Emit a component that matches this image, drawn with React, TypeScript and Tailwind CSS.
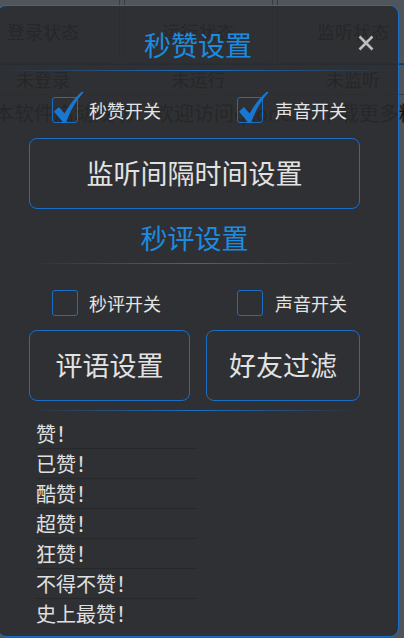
import React from "react";

const CheckBox: React.FC<{ checked?: boolean }> = ({ checked }) => (
  <span className="relative block h-[26px] w-[26px] shrink-0 rounded-[3px] border border-[#1a6fc4]">
    {checked && (
      <svg
        className="absolute left-[-1px] top-[-7px] h-[34px] w-[33px] overflow-visible"
        viewBox="0 -6 32 34"
      >
        <path
          d="M1.5 14.5 L6.5 10 L12 16.5 C17 8 22 1 29.5 -5.5 L31 -4.5 C24 3 17.5 14 13.5 26 L11 26 Z"
          fill="#1877d2"
        />
      </svg>
    )}
  </span>
);

const CheckRow: React.FC<{ first: string; checked?: boolean }> = ({ first, checked }) => (
  <div className="flex h-[26px] items-center pl-[23px] text-[18px] text-[#e4e4e4]">
    <CheckBox checked={checked} />
    <span className="ml-[11px] w-[72px] leading-none">{first}</span>
    <span className="ml-[76px]">
      <CheckBox checked={checked} />
    </span>
    <span className="ml-[12px] leading-none">声音开关</span>
  </div>
);

const Divider: React.FC = () => (
  <div className="h-px w-full bg-gradient-to-r from-transparent via-[#1a6fc4] to-transparent" />
);

const comments = ["赞！", "已赞！", "酷赞！", "超赞！", "狂赞！", "不得不赞！", "史上最赞！"];

export default function App() {
  return (
    <div className="relative h-[638px] w-[404px] overflow-hidden bg-[#c8d4e6] font-['Noto_Sans_CJK_SC','Noto_Sans',sans-serif]">
      {/* page behind the dialog */}
      <div className="flex flex-col">
        <div className="-ml-[34px] -mt-[6px] flex h-[71px] gap-[4px] border-b border-[#3d8fe0]">
          {["登录状态", "运行状态", "监听状态"].map((t, i) => (
            <div
              key={t}
              className={`flex shrink-0 items-center justify-center rounded-[5px] border border-[#8e98a4] pt-[4px] text-[18px] text-[#333] ${
                i === 0 ? "w-[154px]" : i === 1 ? "w-[149px]" : "w-[152px]"
              }`}
            >
              {t}
            </div>
          ))}
        </div>
        <div className="-ml-[34px] flex h-[30px] gap-[4px] border-b border-[#8e98a4]">
          {["未登录", "未运行", "未监听"].map((t, i) => (
            <div
              key={t}
              className={`flex shrink-0 items-center justify-center text-[18px] text-[#333] ${
                i === 0 ? "w-[154px]" : i === 1 ? "w-[149px]" : "w-[152px]"
              }`}
            >
              {t}
            </div>
          ))}
        </div>
        <p className="-ml-[6px] mt-[3px] whitespace-nowrap text-[20px] leading-[30px] text-[#333]">
          本软件启动成功！欢迎访问qzone.cn下载更多精彩内容
        </p>
      </div>

      {/* mask */}
      <div className="absolute inset-0 bg-black/60" />

      {/* dialog */}
      <div className="absolute left-[-3px] top-[5px] h-[632px] w-[402px] rounded-[9px] border border-[#1a6fc4] bg-[rgba(41,42,44,0.85)]">
        <div className="relative flex h-[64px] items-center justify-center pt-[12px]">
          <h2 className="text-[27px] leading-none text-[#1d8ce0]">秒赞设置</h2>
          <button className="absolute right-[24px] top-[29px] h-[16px] w-[16px]">
            <svg viewBox="0 0 16 16" className="h-[16px] w-[16px]">
              <path d="M1.5 1.5 L14.5 14.5 M14.5 1.5 L1.5 14.5" stroke="#bdbdbd" strokeWidth="2.6" />
            </svg>
          </button>
        </div>
        <Divider />

        <div className="ml-[31px] w-[331px]">
          <div className="mt-[26px]">
            <CheckRow first="秒赞开关" checked />
          </div>

          <button className="mt-[15px] flex h-[71px] w-full items-center justify-center rounded-[8px] border border-[#1a6fc4] text-[27px] text-[#e2e2e2]">
            监听间隔时间设置
          </button>

          <h2 className="mt-[14px] text-center text-[27px] leading-[30px] text-[#1d8ce0]">秒评设置</h2>
          <div className="mt-[10px]">
            <Divider />
          </div>

          <div className="mt-[26px]">
            <CheckRow first="秒评开关" />
          </div>

          <div className="mt-[14px] flex gap-[16px]">
            <button className="flex h-[71px] w-[161px] items-center justify-center rounded-[8px] border border-[#1a6fc4] text-[27px] text-[#e2e2e2]">
              评语设置
            </button>
            <button className="flex h-[71px] w-[154px] items-center justify-center rounded-[8px] border border-[#1a6fc4] text-[27px] text-[#e2e2e2]">
              好友过滤
            </button>
          </div>

          <div className="mt-[9px]">
            <Divider />
          </div>

          <ul className="ml-[7px] mt-[8px] w-[161px]">
            {comments.map((c, i) => (
              <li
                key={c}
                className={`h-[30px] text-[20px] leading-[30px] text-[#e0e0e0] ${
                  i < comments.length - 1 ? "border-b border-[#27282a]" : ""
                }`}
              >
                {c}
              </li>
            ))}
          </ul>
        </div>
      </div>
    </div>
  );
}
